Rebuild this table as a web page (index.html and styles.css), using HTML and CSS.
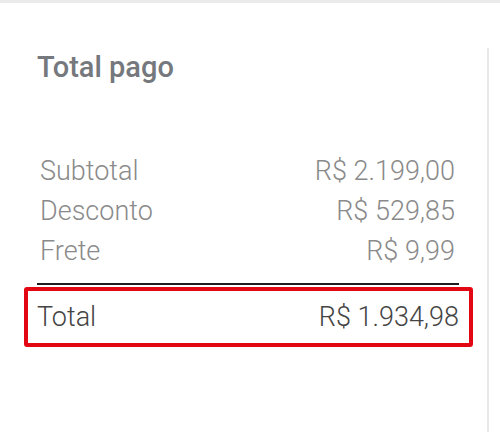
FILE: index.html
```html
<!DOCTYPE html>
<html lang="pt-BR">
<head>
  <meta charset="UTF-8">
  <title>Total pago</title>
  <link rel="stylesheet" href="styles.css">
</head>
<body>
  <div class="page">
    <div class="card">
      <h2 class="title">Total pago</h2>

      <div class="rows">
        <div class="row"><span>Subtotal</span><span>R$ 2.199,00</span></div>
        <div class="row"><span>Desconto</span><span>R$ 529,85</span></div>
        <div class="row"><span>Frete</span><span>R$ 9,99</span></div>
      </div>

      <div class="divider"></div>

      <div class="total">
        <span>Total</span>
        <span>R$ 1.934,98</span>
      </div>
    </div>
  </div>
</body>
</html>
```

FILE: styles.css
```css
body {
  margin: 0;
  font-family: Roboto, "Liberation Sans", Arial, sans-serif;
  background-color: #ffffff;
}

.page {
  border-top: 3px solid #ebebeb;
  height: 429px;
}

.card {
  margin-top: 45px;
  width: 489px;
  height: 384px;
  border-right: 2px solid #e8e8e8;
  padding-top: 3px;
  box-sizing: border-box;
}

.title {
  margin: 0 0 0 37px;
  font-size: 29px;
  font-weight: 500;
  line-height: 33px;
  color: #75787d;
}

.rows {
  margin: 67px 32px 0 40px;
}

.row {
  display: flex;
  justify-content: space-between;
  font-size: 27px;
  font-weight: 300;
  line-height: 40px;
  color: #8a8a8a;
}

.divider {
  margin: 12px 28px 0 37px;
  height: 2px;
  background: #1e1e1e;
}

.total {
  display: flex;
  justify-content: space-between;
  margin: 2px 14px 0 24px;
  padding: 0 10px 0 9px;
  height: 52px;
  border: 4px solid #e30613;
  border-radius: 3px;
  font-size: 27px;
  font-weight: 300;
  line-height: 52px;
  color: #444444;
}
```
